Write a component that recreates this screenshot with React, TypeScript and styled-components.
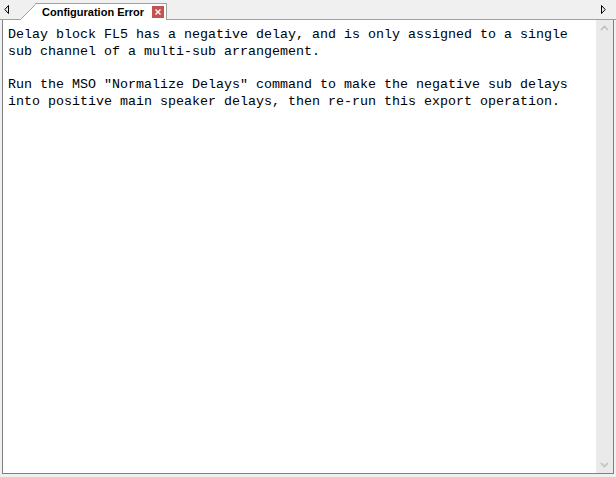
import React from "react";
import styled, { createGlobalStyle } from "styled-components";

const Global = createGlobalStyle`
  html, body { margin: 0; padding: 0; background: #f0f0f0; }
  #root { width: 616px; height: 477px; }
`;

const Frame = styled.div`
  width: 616px;
  height: 477px;
  display: flex;
  flex-direction: column;
  background: #f0f0f0;
  overflow: hidden;
`;

const TabStrip = styled.div`
  height: 20px;
  display: flex;
  align-items: flex-end;
  border-bottom: 1px solid #a0a0a0;
  box-sizing: border-box;
`;

const Arrow = styled.div<{ $side: "left" | "right" }>`
  width: 20px;
  height: 19px;
  display: flex;
  align-items: center;
  justify-content: flex-start;
  padding-left: 4px;
  margin-left: ${(p) => (p.$side === "right" ? "auto" : "0")};
  box-sizing: border-box;
`;

const Tab = styled.div`
  display: flex;
  align-items: stretch;
  height: 17px;
  margin-bottom: -1px;
`;

const TabBody = styled.div`
  display: flex;
  align-items: center;
  gap: 8px;
  background: #ffffff;
  border-top: 1px solid #a0a0a0;
  border-right: 1px solid #a0a0a0;
  padding: 0 2px 1px 6px;
  box-sizing: border-box;
  height: 17px;
`;

const TabLabel = styled.span`
  font-family: "Liberation Sans", Arial, sans-serif;
  font-weight: bold;
  font-size: 11px;
  color: #000;
`;

const CloseBtn = styled.div`
  width: 12px;
  height: 12px;
  background: #c75050;
  display: flex;
  align-items: center;
  justify-content: center;
`;

const Body = styled.div`
  flex: 1;
  display: flex;
  padding: 0 2px 3px 2px;
  min-height: 0;
`;

const Pane = styled.div`
  flex: 1;
  display: flex;
  border-left: 1px solid #808080;
  border-bottom: 1px solid #808080;
  border-right: 1px solid #808080;
  background: #ffffff;
  min-height: 0;
`;

const TextArea = styled.div`
  flex: 1;
  padding: 7px 0 0 5px;
  font-family: "Liberation Mono", "Courier New", monospace;
  font-size: 13.333px;
  line-height: 16.75px;
  color: #000;
  white-space: pre;
`;

const ScrollBar = styled.div`
  width: 17px;
  background: #eaeaea;
  display: flex;
  flex-direction: column;
  justify-content: space-between;
  align-items: center;
  padding: 5px 0;
  box-sizing: border-box;
`;

const text = `Delay block FL5 has a negative delay, and is only assigned to a single
sub channel of a multi-sub arrangement.

Run the MSO "Normalize Delays" command to make the negative sub delays
into positive main speaker delays, then re-run this export operation.`;

export default function App() {
  return (
    <>
      <Global />
      <Frame>
        <TabStrip>
          <Arrow $side="left">
            <svg width="6" height="9" viewBox="0 0 6 9">
              <path d="M4.5 0.5 L0.8 4.5 L4.5 8.5 Z" fill="none" stroke="#000" strokeWidth="1" />
            </svg>
          </Arrow>
          <Tab>
            <svg width="16" height="17" viewBox="0 0 16 17" style={{ display: "block" }}>
              <path d="M0 17 L16 1 L16 17 Z" fill="#ffffff" />
              <path d="M0.5 16.5 L15.5 1.5" stroke="#a0a0a0" strokeWidth="1" fill="none" />
              <path d="M15 0.5 L16 0.5" stroke="#a0a0a0" strokeWidth="1" />
            </svg>
            <TabBody>
              <TabLabel>Configuration Error</TabLabel>
              <CloseBtn>
                <svg width="6" height="6" viewBox="0 0 6 6">
                  <path d="M0.5 0.5 L5.5 5.5 M5.5 0.5 L0.5 5.5" stroke="#fff" strokeWidth="1.4" />
                </svg>
              </CloseBtn>
            </TabBody>
          </Tab>
          <Arrow $side="right">
            <svg width="6" height="9" viewBox="0 0 6 9">
              <path d="M1.5 0.5 L5.2 4.5 L1.5 8.5 Z" fill="none" stroke="#000" strokeWidth="1" />
            </svg>
          </Arrow>
        </TabStrip>
        <Body>
          <Pane>
            <TextArea>{text}</TextArea>
            <ScrollBar>
              <svg width="9" height="6" viewBox="0 0 9 6">
                <path d="M1 5 L4.5 1.5 L8 5" stroke="#c0c0c0" strokeWidth="1.6" fill="none" />
              </svg>
              <svg width="9" height="6" viewBox="0 0 9 6">
                <path d="M1 1 L4.5 4.5 L8 1" stroke="#c0c0c0" strokeWidth="1.6" fill="none" />
              </svg>
            </ScrollBar>
          </Pane>
        </Body>
      </Frame>
    </>
  );
}
